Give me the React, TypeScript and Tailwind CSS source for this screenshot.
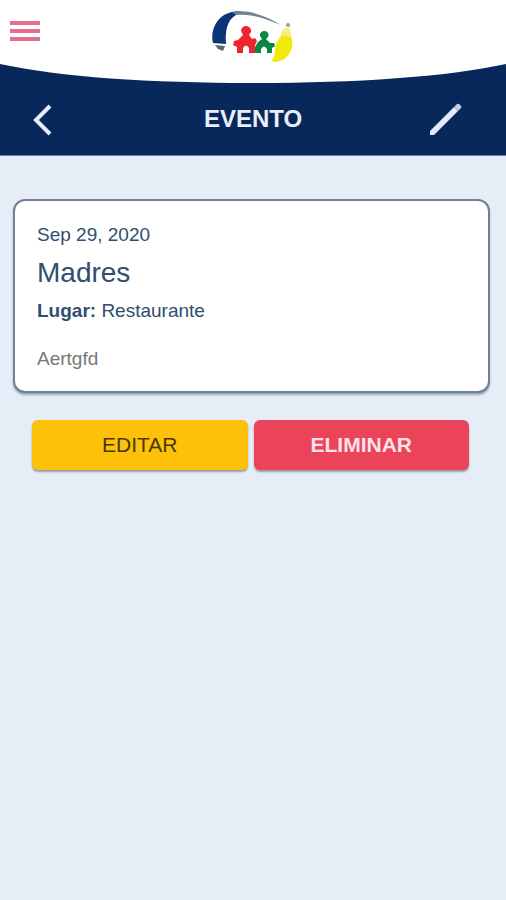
import React from 'react';

interface Evento {
    fecha: string;
    titulo: string;
    lugar: string;
    descripcion: string;
}

const evento: Evento = {
    fecha: 'Sep 29, 2020',
    titulo: 'Madres',
    lugar: 'Restaurante',
    descripcion: 'Aertgfd',
};

const Logo: React.FC = () => (
    <svg viewBox="0 0 106 72" className="w-[106px] h-[72px]" role="img" aria-label="Logo">
        <path d="M13 43 C10 30 17 15 32 12 C36 11 40 11 43 12 L36 15 C27 20 25 31 26 44 Z" fill="#0b3576" />
        <path d="M32 12 C50 9 68 17 81 25 C68 20 52 13 36 15 Z" fill="#74808f" />
        <path d="M15 45 L25 46 L23 51 L18 49 Z" fill="#5c6673" />
        <path
            d="M46 26 a5 5 0 0 1 5 6 L49 35 L52 39 L55 38 L57 41 L55 45 L55 53 L49 53 L49 48 Q46 43 43 48 L43 53 L37 53 L37 47 L33 45 L34 41 L38 40 L43 35 L41 31 a5 5 0 0 1 5 -5 Z"
            fill="#ee2530"
        />
        <path
            d="M64 31 a4 4 0 0 1 4 6 L66 39 L70 43 L74 43 L75 46 L72 48 L72 53 L67 53 L67 49 Q64 44 61 49 L61 53 L55 53 L55 47 L58 42 L62 39 L60 36 a4 4 0 0 1 4 -5 Z"
            fill="#0b8744"
        />
        <path d="M81 37 C80 33 82 30 85 28 L89 28 L91 33 L92 41 Z" fill="#f6ef78" />
        <path d="M80 37 C84 35 89 35 92 39 C94 51 87 61 75 62 L71 61 C77 55 74 50 76 44 Z" fill="#f0e90c" />
        <circle cx="88" cy="25" r="2" fill="#9a9a86" />
    </svg>
);

const Header: React.FC = () => (
    <header className="bg-[#08285b] border-b border-[#6f82a3]">
        <div className="grid grid-cols-3 items-start bg-white h-16">
            <button type="button" aria-label="Menú" className="justify-self-start p-2 pt-4">
                <svg viewBox="0 0 34 32" className="w-[34px] h-8">
                    <path d="M2 7h30M2 15h30M2 23h30" stroke="#e2708a" strokeWidth="4" />
                </svg>
            </button>
            <div className="justify-self-center relative z-10">
                <Logo />
            </div>
        </div>
        <svg viewBox="0 0 506 19" preserveAspectRatio="none" className="block w-full h-[19px]" aria-hidden="true">
            <path d="M0 0 C60 13 150 19 253 19 S446 13 506 0 Z" fill="#ffffff" />
        </svg>
        <div className="grid grid-cols-[1fr_auto_1fr] items-center h-[72px] px-6">
            <button type="button" aria-label="Volver" className="justify-self-start">
                <svg viewBox="0 0 36 40" className="w-9 h-10">
                    <path d="M26 7 L12 21 L26 35" fill="none" stroke="#e6edfa" strokeWidth="4" />
                </svg>
            </button>
            <h1 className="text-2xl leading-7 font-bold text-[#e9eefa]">EVENTO</h1>
            <button type="button" aria-label="Editar evento" className="justify-self-end pr-4">
                <svg viewBox="0 0 40 40" className="w-10 h-10">
                    <path d="M4 32 L28 8 L32 12 L8 36 L4 36 Z" fill="#e3ebfa" />
                    <path d="M28 8 L31 5 Q33 4 34 6 L35 7 Q36 8 35 9 L32 12 Z" fill="#c3cfe2" />
                </svg>
            </button>
        </div>
    </header>
);

const App: React.FC = () => {
    return (
        <div className="min-h-screen bg-[#e7edf6] font-['Liberation_Sans',Arial,sans-serif]">
            <Header />
            <main className="pt-[43px]">
                <article className="ml-[13px] mr-4 px-[22px] pt-5 pb-[18px] bg-white border-2 border-[#6d8296] rounded-xl shadow-[0_2px_2px_rgba(60,80,105,0.45)] text-[19px] text-[#314d6f]">
                    <p className="leading-7">{evento.fecha}</p>
                    <h2 className="mt-1 text-[28px] leading-10">{evento.titulo}</h2>
                    <p className="mt-1 leading-7">
                        <strong className="font-bold">Lugar:</strong> {evento.lugar}
                    </p>
                    <p className="mt-5 leading-7 text-[#777777]">{evento.descripcion}</p>
                </article>
                <div className="flex gap-[6px] mt-[27px] pl-8 pr-[37px] text-[21px]">
                    <button
                        type="button"
                        className="flex-1 h-[50px] rounded-md bg-[#fdc10a] text-[#4b3706] shadow-[0_2px_2px_rgba(60,60,70,0.45)]"
                    >
                        EDITAR
                    </button>
                    <button
                        type="button"
                        className="flex-1 h-[50px] rounded-md bg-[#eb445a] font-bold text-[#fce3e8] shadow-[0_2px_2px_rgba(60,60,70,0.45)]"
                    >
                        ELIMINAR
                    </button>
                </div>
            </main>
        </div>
    );
};

export default App;
